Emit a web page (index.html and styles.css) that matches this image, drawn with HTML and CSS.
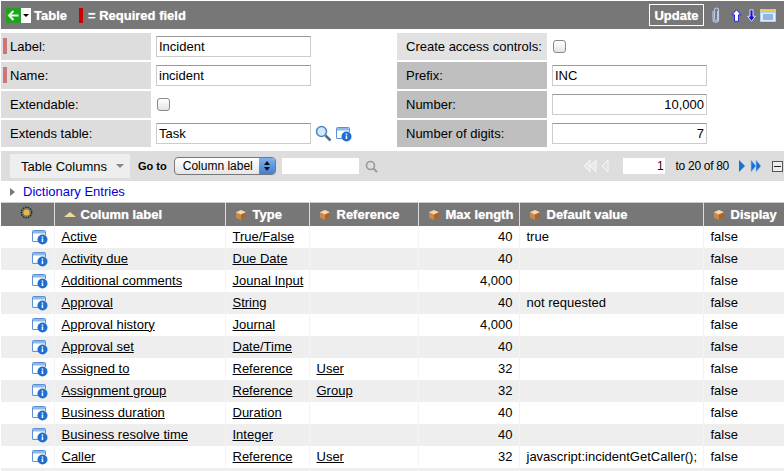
FILE: index.html
```html
<!DOCTYPE html>
<html lang="en">

<head>
    <meta charset="UTF-8">
    <meta name="viewport" content="width=device-width, initial-scale=1.0">
    <title>Table - Incident</title>
    <link rel="stylesheet" href="styles.css">
</head>

<body>
    <svg class="defs" width="0" height="0">
        <symbol id="info" viewBox="0 0 17 16">
            <path d="M1.500 12V2.500q0-1 1-1h11q1 0 1 1V6" fill="#fff" stroke="#5a8fd6"/>
            <path d="M2 2h12v2.500H2z" fill="#8fb8ea"/>
            <path d="M1.500 12.500H8" stroke="#5a8fd6" fill="none"/>
            <circle cx="11.500" cy="10.500" r="5" fill="#1f6fd0"/>
            <path d="M10.700 9.500h1.500v3.500h-1.500zM10.700 7.500h1.500v1.200h-1.500z" fill="#fff"/>
        </symbol>
        <symbol id="box" viewBox="0 0 12 12">
            <path d="M6 1l5 2.300v5.400L6 11 1 8.700V3.300z" fill="#c98a4b"/>
            <path d="M6 1l5 2.300L6 5.600 1 3.300z" fill="#f0d9b5"/>
            <path d="M6 5.600L11 3.300v5.400L6 11z" fill="#a8652c"/>
        </symbol>
    </svg>

    <header class="title-bar">
        <span class="back-btn">
            <svg width="15" height="15" viewBox="0 0 15 15">
                <rect width="15" height="15" fill="#22a022"/>
                <path d="M7.500 3L3 7.500 7.500 12M3.500 7.500H12.500" fill="none" stroke="#e4ffe4" stroke-width="2"/>
            </svg>
            <span class="caret"></span>
        </span>
        <span class="title-text">Table</span>
        <span class="req-mark"></span>
        <span class="title-text">= Required field</span>
        <span class="spacer"></span>
        <button class="update-btn">Update</button>
        <svg class="clip" width="8" height="16" viewBox="0 0 8 16">
            <path d="M5.500 4v8a1.500 1.500 0 0 1-3 0V3a2 2 0 0 1 4 0v9.500a2.700 2.700 0 0 1-5.500 0V4" fill="none" stroke="#b9cbe6" stroke-width="1.100"/>
        </svg>
        <svg class="arrow-up" width="11" height="13" viewBox="0 0 11 13">
            <path d="M5.500 .8l4.500 5H7.500v6.500h-4V5.800H1z" fill="#fff" stroke="#2a2ad0"/>
        </svg>
        <svg class="arrow-down" width="9" height="13" viewBox="0 0 9 13">
            <path d="M3 .8h3v6.500h2.400l-3.900 5-3.900-5H3z" fill="#1414e0" stroke="#fff" stroke-width=".8"/>
        </svg>
        <svg class="notes" width="16" height="13" viewBox="0 0 16 13">
            <rect width="16" height="13" fill="#a9d0f5"/>
            <rect width="16" height="3" fill="#f2c94c"/>
            <rect x="1" y="4" width="14" height="8" fill="#dceeff"/>
            <path d="M3 6h10M3 8h10M3 10h10" stroke="#4a7fc0"/>
        </svg>
    </header>

    <section class="form-grid">
        <div class="form-row">
            <label class="field-label required">Label:</label>
            <div class="field"><input class="text-input" value="Incident"></div>
        </div>
        <div class="form-row right">
            <label class="field-label light">Create access controls:</label>
            <div class="field"><span class="check"></span></div>
        </div>
        <div class="form-row">
            <label class="field-label required">Name:</label>
            <div class="field"><input class="text-input" value="incident"></div>
        </div>
        <div class="form-row right">
            <label class="field-label dark">Prefix:</label>
            <div class="field"><input class="text-input" value="INC"></div>
        </div>
        <div class="form-row">
            <label class="field-label">Extendable:</label>
            <div class="field"><span class="check"></span></div>
        </div>
        <div class="form-row right">
            <label class="field-label dark">Number:</label>
            <div class="field"><input class="text-input num" value="10,000"></div>
        </div>
        <div class="form-row">
            <label class="field-label">Extends table:</label>
            <div class="field">
                <input class="text-input" value="Task">
                <svg class="lookup" width="17" height="17" viewBox="0 0 17 17">
                    <circle cx="6.500" cy="6.500" r="5" fill="#d4e8fa" stroke="#4a86c5" stroke-width="1.500"/>
                    <path d="M10.500 10.500l5 5" stroke="#4d6c8c" stroke-width="2.500"/>
                </svg>
                <svg class="info-icon" width="17" height="16"><use href="#info"/></svg>
            </div>
        </div>
        <div class="form-row right">
            <label class="field-label dark">Number of digits:</label>
            <div class="field"><input class="text-input num" value="7"></div>
        </div>
    </section>

    <nav class="list-bar">
        <span class="list-menu">Table Columns <span class="menu-caret"></span></span>
        <b class="goto">Go to</b>
        <span class="select-box">Column label<span class="select-arrows"></span></span>
        <span class="goto-input"></span>
        <svg class="goto-search" width="13" height="13" viewBox="0 0 13 13">
            <circle cx="5.500" cy="5.500" r="4" fill="none" stroke="#999" stroke-width="1.600"/>
            <path d="M8.500 8.500l3.500 3.500" stroke="#999" stroke-width="2"/>
        </svg>
        <span class="spacer"></span>
        <svg class="pager-first" width="18" height="14" viewBox="0 0 18 14">
            <path d="M8 1L2 7l6 6zM14 1L8 7l6 6z" fill="#e8e8e8" stroke="#f6f6f6"/>
        </svg>
        <svg class="pager-prev" width="9" height="14" viewBox="0 0 9 14">
            <path d="M7 1L1 7l6 6z" fill="#e0e0e0" stroke="#f6f6f6"/>
        </svg>
        <span class="page-input">1</span>
        <span class="page-text">to 20 of 80</span>
        <svg class="pager-next" width="8" height="14" viewBox="0 0 8 14">
            <path d="M1 1l6 6-6 6z" fill="#1f6fd0"/>
        </svg>
        <svg class="pager-last" width="12" height="14" viewBox="0 0 12 14">
            <path d="M1 1l5 6-5 6zM6 1l5 6-5 6z" fill="#1f6fd0" stroke="#9cc4ee" stroke-width=".6"/>
        </svg>
        <span class="collapse-btn"></span>
    </nav>

    <div class="related"><span class="tri"></span><a class="related-link">Dictionary Entries</a></div>

    <table class="list">
        <colgroup>
            <col class="c-icon"><col class="c-label"><col class="c-type"><col class="c-ref"><col class="c-max"><col class="c-def"><col class="c-disp">
        </colgroup>
        <thead>
            <tr>
                <th class="gear-cell">
                    <svg width="13" height="13" viewBox="0 0 13 13">
                        <circle cx="6.500" cy="6.500" r="5.200" fill="none" stroke="#222" stroke-width="1.400" stroke-dasharray="1.500 1"/>
                        <circle cx="6.500" cy="6.500" r="3" fill="#e9b93c"/>
                    </svg>
                </th>
                <th><span class="sort-up"></span>Column label</th>
                <th><svg class="box" width="12" height="12"><use href="#box"/></svg>Type</th>
                <th><svg class="box" width="12" height="12"><use href="#box"/></svg>Reference</th>
                <th><svg class="box" width="12" height="12"><use href="#box"/></svg>Max length</th>
                <th><svg class="box" width="12" height="12"><use href="#box"/></svg>Default value</th>
                <th><svg class="box" width="12" height="12"><use href="#box"/></svg>Display</th>
            </tr>
        </thead>
        <tbody id="rows"></tbody>
    </table>

    <script>
        const rows = [
            ['Active', 'True/False', '', '40', 'true'],
            ['Activity due', 'Due Date', '', '40', ''],
            ['Additional comments', 'Jounal Input', '', '4,000', ''],
            ['Approval', 'String', '', '40', 'not requested'],
            ['Approval history', 'Journal', '', '4,000', ''],
            ['Approval set', 'Date/Time', '', '40', ''],
            ['Assigned to', 'Reference', 'User', '32', ''],
            ['Assignment group', 'Reference', 'Group', '32', ''],
            ['Business duration', 'Duration', '', '40', ''],
            ['Business resolve time', 'Integer', '', '40', ''],
            ['Caller', 'Reference', 'User', '32', 'javascript:incidentGetCaller();']
        ];
        const body = document.getElementById('rows');
        rows.forEach(function (r) {
            const tr = document.createElement('tr');
            tr.innerHTML = `<td class="icon-cell"><svg width="17" height="16"><use href="#info"/></svg></td>
                <td><a>${r[0]}</a></td>
                <td><a>${r[1]}</a></td>
                <td><a>${r[2]}</a></td>
                <td class="num-cell">${r[3]}</td>
                <td>${r[4]}</td>
                <td>false</td>`;
            body.appendChild(tr);
        });
        // next row is cut off by the window, only its background shows
        const last = document.createElement('tr');
        last.innerHTML = '<td></td><td></td><td></td><td></td><td></td><td></td><td></td>';
        body.appendChild(last);
    </script>
</body>

</html>
```

FILE: styles.css
```css
html,
body {
    height: 100%;
    overflow: hidden;
}

body {
    margin: 0;
    padding-top: 1px;
    box-sizing: border-box;
    background-color: #fff;
    color: #000;
    font-family: "Liberation Sans", Arial, sans-serif;
    font-size: 13px;
}

.defs {
    position: absolute;
}

.spacer {
    flex: 1;
}

/* title bar */
.title-bar {
    display: flex;
    align-items: center;
    height: 28px;
    margin-left: 1px;
    padding-left: 5px;
    background-color: #777;
}

.back-btn {
    display: flex;
    align-items: center;
    width: 25px;
    height: 15px;
    background-color: #fff;
}

.caret {
    margin-left: 2px;
    border-left: 3px solid transparent;
    border-right: 3px solid transparent;
    border-top: 3px solid #000;
}

.title-text {
    color: #fff;
    font-size: 13px;
    font-weight: bold;
    text-shadow: 0 0 1px rgba(255, 255, 255, .7);
}

.back-btn + .title-text {
    margin-left: 3px;
}

.req-mark {
    width: 4px;
    height: 15px;
    margin: 0 5px 0 12px;
    background-color: #c00;
}

.update-btn {
    width: 55px;
    height: 22px;
    padding: 0;
    background-color: #777;
    border: 1px solid #fff;
    color: #fff;
    font-family: inherit;
    font-size: 13px;
    font-weight: bold;
    text-shadow: 0 0 1px rgba(255, 255, 255, .7);
}

.clip {
    margin-left: 8px;
}

.arrow-up {
    margin-left: 11px;
}

.arrow-down {
    margin-left: 5px;
}

.notes {
    margin: 0 8px 0 4px;
}

/* form */
.form-grid {
    display: grid;
    grid-template-columns: 396px 1fr;
    row-gap: 2px;
    margin-top: 4px;
    padding-left: 1px;
}

.form-row {
    display: flex;
    align-items: center;
    height: 27px;
}

.form-row.right .field-label {
    padding-left: 9px;
}

.field-label {
    position: relative;
    display: flex;
    align-items: center;
    flex: none;
    box-sizing: border-box;
    width: 150px;
    height: 100%;
    padding-left: 9px;
    background-color: #ddd;
    white-space: nowrap;
}

.field-label.required::before {
    content: "";
    position: absolute;
    left: 2px;
    top: 5px;
    width: 4px;
    height: 16px;
    background-color: #cc7777;
}

.field-label.light {
    background-color: #e2e2e2;
}

.field-label.dark {
    background-color: #bfbfbf;
}

.field {
    display: flex;
    align-items: center;
    padding-left: 5px;
}

.text-input {
    box-sizing: border-box;
    width: 155px;
    height: 21px;
    padding: 0 2px;
    border: 1px solid #ccc;
    border-top-color: #999;
    font-family: inherit;
    font-size: 13px;
    outline: none;
}

.text-input.num {
    text-align: right;
}

.check {
    box-sizing: border-box;
    width: 13px;
    height: 13px;
    margin-left: 1px;
    border: 1px solid #888;
    border-radius: 3px;
    background: linear-gradient(#fff, #e4e4e4);
}

.lookup {
    margin-left: 4px;
}

.info-icon {
    margin-left: 3px;
}

/* list header */
.list-bar {
    display: flex;
    align-items: center;
    height: 30px;
    margin: 4px 0 0 1px;
    padding-left: 9px;
    background-color: #ddd;
}

.list-menu {
    display: flex;
    align-items: center;
    box-sizing: border-box;
    width: 120px;
    height: 24px;
    padding-left: 11px;
    background-color: #eee;
}

.menu-caret {
    margin-left: 9px;
    border-left: 4px solid transparent;
    border-right: 4px solid transparent;
    border-top: 4px solid #888;
}

.goto {
    margin-left: 8px;
    font-size: 11px;
}

.select-box {
    position: relative;
    box-sizing: border-box;
    width: 102px;
    height: 18px;
    margin-left: 7px;
    padding-left: 8px;
    border: 1px solid #777;
    border-radius: 4px;
    background: linear-gradient(#fff, #e6e6e6);
    font-size: 12px;
    line-height: 16px;
}

.select-arrows {
    position: absolute;
    top: 0;
    right: 0;
    width: 16px;
    height: 16px;
    border-radius: 0 3px 3px 0;
    background: linear-gradient(#7fb2ea, #3f80d6);
}

.select-arrows::before,
.select-arrows::after {
    content: "";
    position: absolute;
    left: 5px;
    border-left: 3px solid transparent;
    border-right: 3px solid transparent;
}

.select-arrows::before {
    top: 3px;
    border-bottom: 4px solid #111;
}

.select-arrows::after {
    bottom: 3px;
    border-top: 4px solid #111;
}

.goto-input {
    width: 77px;
    height: 16px;
    margin-left: 6px;
    background-color: #fff;
}

.goto-search {
    margin-left: 6px;
}

.pager-prev {
    margin-left: 1px;
}

.page-input {
    box-sizing: border-box;
    width: 42px;
    height: 16px;
    margin-left: 13px;
    padding-right: 1px;
    background-color: #fff;
    color: #303;
    font-size: 12px;
    line-height: 16px;
    text-align: right;
}

.page-text {
    margin-left: 11px;
    font-size: 12px;
    letter-spacing: -.3px;
}

.pager-next {
    margin-left: 9px;
}

.pager-last {
    margin-left: 4px;
}

.collapse-btn {
    position: relative;
    box-sizing: border-box;
    width: 11px;
    height: 11px;
    margin: 0 1px 0 10px;
    border: 1px solid #555;
    background-color: #eee;
}

.collapse-btn::after {
    content: "";
    position: absolute;
    left: 1px;
    top: 4px;
    width: 7px;
    height: 1px;
    background-color: #222;
}

/* related link */
.related {
    display: flex;
    align-items: center;
    height: 21px;
    padding-left: 10px;
}

.tri {
    margin-right: 8px;
    border-top: 4px solid transparent;
    border-bottom: 4px solid transparent;
    border-left: 5px solid #777;
}

.related-link {
    color: #00d;
}

/* table */
.list {
    width: 783px;
    margin-left: 1px;
    border-collapse: collapse;
    table-layout: fixed;
}

.c-icon { width: 53px; }
.c-label { width: 171px; }
.c-type { width: 84px; }
.c-ref { width: 109px; }
.c-max { width: 101px; }
.c-def { width: 184px; }
.c-disp { width: 81px; }

.list th {
    box-sizing: border-box;
    height: 23px;
    padding: 0 0 0 9px;
    border-top: 1px solid #ccc;
    border-right: 1px solid #ddd;
    background-color: #777;
    color: #fff;
    font-size: 13px;
    font-weight: bold;
    text-align: left;
    text-shadow: 0 0 1px rgba(255, 255, 255, .7);
    white-space: nowrap;
}

.list th:last-child {
    border-right: none;
}

.list th .box {
    margin-right: 6px;
    vertical-align: -2px;
}

.list th.gear-cell {
    padding: 0 2px 0 0;
    text-align: center;
}

.gear-cell svg {
    vertical-align: 0;
}

.sort-up {
    display: inline-block;
    margin-right: 5px;
    border-left: 6px solid transparent;
    border-right: 6px solid transparent;
    border-bottom: 5px solid #f0dc9a;
    vertical-align: 2px;
}

.list td {
    box-sizing: border-box;
    height: 22px;
    padding: 0 0 0 7px;
    border-right: 1px solid #f3f3f3;
    line-height: 20px;
    white-space: nowrap;
}

.list td:last-child {
    border-right: none;
}

.list tbody tr:nth-child(even) td {
    background-color: #eee;
}

.list td a {
    color: #000;
    text-decoration: underline;
}

.list td.icon-cell {
    padding: 0 6px 0 0;
    text-align: right;
}

.icon-cell svg {
    display: inline-block;
    vertical-align: top;
    margin-top: 2px;
}

.list td.num-cell {
    padding: 0 6px 0 0;
    text-align: right;
}
```
